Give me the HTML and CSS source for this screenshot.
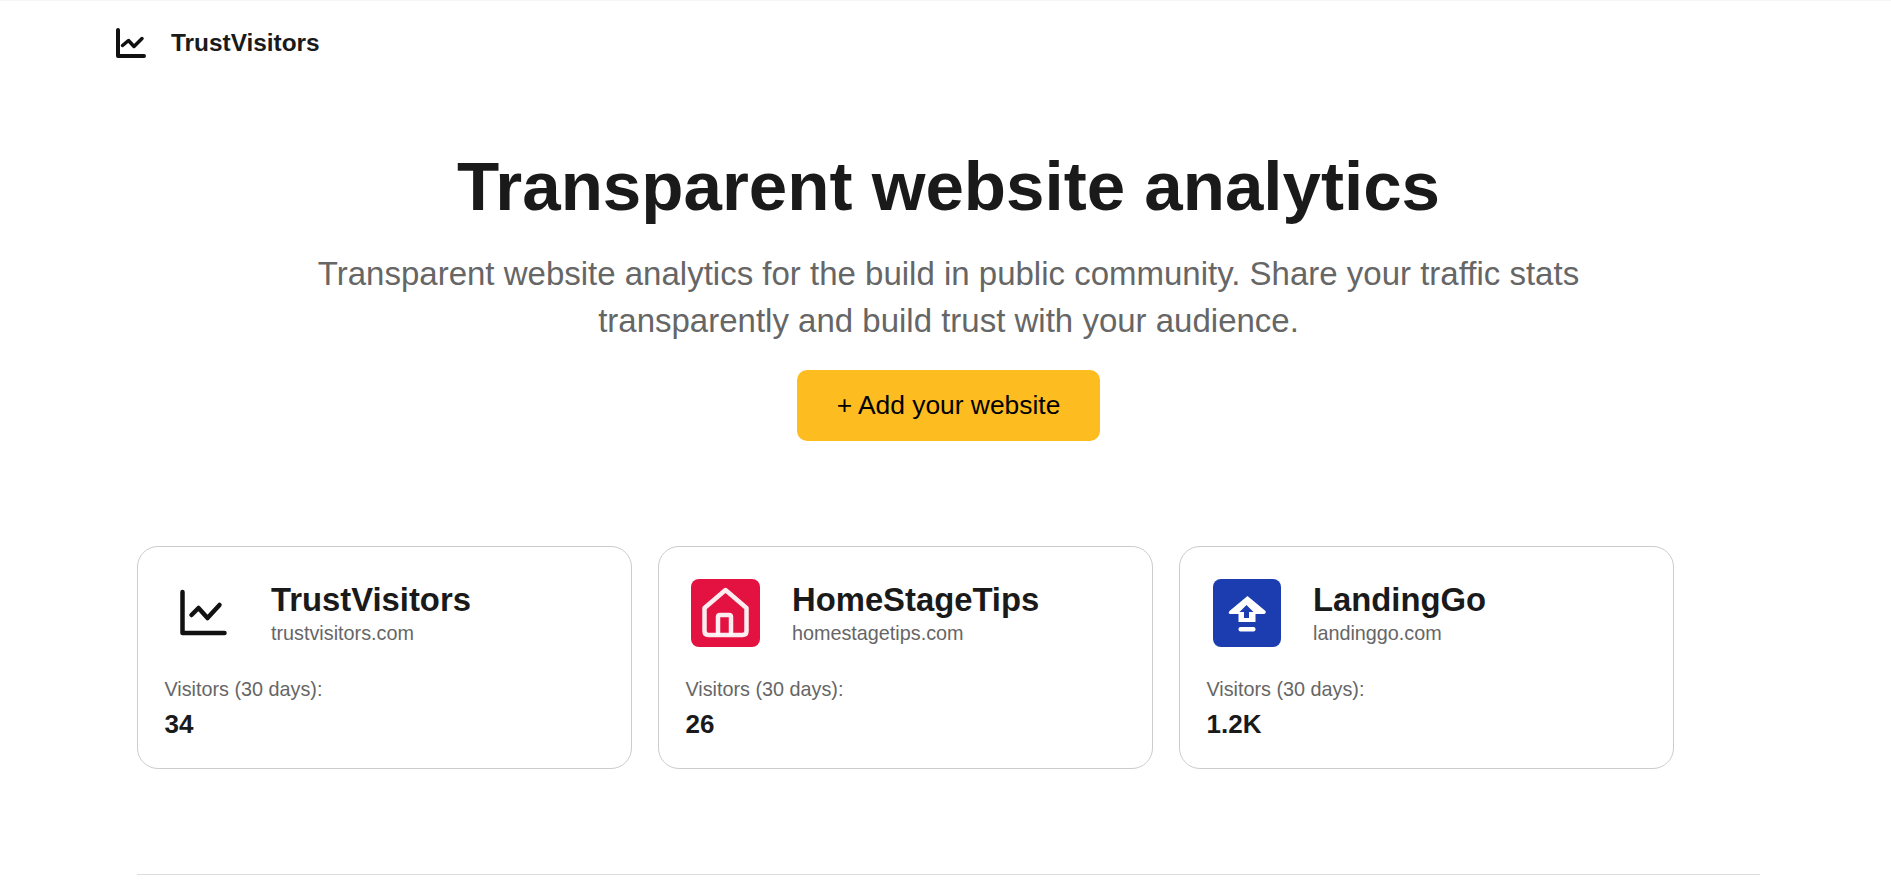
FILE: index.html
```html
<!DOCTYPE html>
<html lang="en">
<head>
  <meta charset="UTF-8" />
  <meta name="viewport" content="width=device-width, initial-scale=1.0" />
  <title>TrustVisitors</title>
  <link rel="stylesheet" href="styles.css">
</head>
<body>
  <header class="topbar">
    <svg class="topbar-icon" viewBox="0 0 32 32" fill="none" stroke="currentColor" stroke-width="4" stroke-linecap="round" stroke-linejoin="round">
      <path d="M3 3v26h26" />
      <path d="M7.500 18.500l6-5 5.500 6 8-8" stroke-width="3.500" />
    </svg>
    <span class="brand">TrustVisitors</span>
  </header>

  <main class="page">
    <section class="hero">
      <h1>Transparent website analytics</h1>
      <p>Transparent website analytics for the build in public community. Share your traffic stats transparently and build trust with your audience.</p>
      <a class="add-btn" href="#">+ Add your website</a>
    </section>

    <section class="cards">
      <article class="card">
        <div class="card-head">
          <div class="logo">
            <svg viewBox="0 0 80 80" fill="none" stroke="#111" stroke-width="4.500" stroke-linecap="round" stroke-linejoin="round">
              <path d="M17.500 19v41h42" />
              <path d="M26.500 42l7-7 9 10 12-13" />
            </svg>
          </div>
          <div>
            <h2>TrustVisitors</h2>
            <div class="domain">trustvisitors.com</div>
          </div>
        </div>
        <div class="stat-label">Visitors (30 days):</div>
        <div class="stat-value">34</div>
      </article>

      <article class="card">
        <div class="card-head">
          <div class="logo">
            <svg viewBox="0 0 80 80" fill="none">
              <rect x="5" y="6" width="69" height="68" rx="8" fill="#e31240" />
              <path d="M18.500 35L39.500 17 60.500 35V58Q60.500 62 56.500 62H22.500Q18.500 62 18.500 58Z" stroke="#fff" stroke-width="4.500" stroke-linejoin="round" stroke-opacity=".92" />
              <path d="M32 62V44Q32 42 34 42H43Q45 42 45 44V62" stroke="#fff" stroke-width="4.500" stroke-opacity=".92" />
            </svg>
          </div>
          <div>
            <h2>HomeStageTips</h2>
            <div class="domain">homestagetips.com</div>
          </div>
        </div>
        <div class="stat-label">Visitors (30 days):</div>
        <div class="stat-value">26</div>
      </article>

      <article class="card">
        <div class="card-head">
          <div class="logo">
            <svg viewBox="0 0 80 80" fill="none">
              <rect x="6" y="6" width="68" height="68" rx="8" fill="#1c3db0" />
              <path d="M40.500 23L58.500 38Q59.500 41 56.500 41H48.500V49H31.500V41H23.500Q20.500 41 22.500 38Z" fill="#fff" />
              <path d="M39.500 32L46.500 39H42V45H37V39H32.500Z" fill="#1c3db0" />
              <rect x="31.500" y="54" width="17" height="4.500" rx="2" fill="#fff" />
            </svg>
          </div>
          <div>
            <h2>LandingGo</h2>
            <div class="domain">landinggo.com</div>
          </div>
        </div>
        <div class="stat-label">Visitors (30 days):</div>
        <div class="stat-value">1.2K</div>
      </article>
    </section>

    <hr class="divider" />
  </main>
</body>
</html>
```

FILE: styles.css
```css
body {
  font-family: "Liberation Sans", Arial, sans-serif;
  color: #1a1a1a;
  background: #fff;
  margin: 0;
  height: 888px;
  overflow: hidden;
  border-top: 1px solid #f7f3f9;
  box-sizing: border-box;
}
.topbar {
  display: flex;
  align-items: center;
  gap: 24px;
  height: 84px;
  padding-left: 115px;
  padding-bottom: 1px;
  box-sizing: border-box;
}
.topbar-icon {
  width: 32px;
  height: 32px;
  color: #111;
}
.brand {
  font-size: 24.4px;
  font-weight: bold;
}
.page {
  width: 1623px;
  margin-left: 137px;
}
.hero {
  display: flex;
  flex-direction: column;
  align-items: center;
  text-align: center;
  padding-top: 60px;
}
.hero h1 {
  font-size: 69.1px;
  line-height: 82px;
  font-weight: bold;
  margin: 0;
}
.hero p {
  width: 1300px;
  font-size: 33px;
  line-height: 47px;
  color: #666;
  margin: 23px 0 0;
}
.add-btn {
  margin-top: 26px;
  padding: 0 40px;
  height: 71px;
  line-height: 71px;
  font-size: 26.4px;
  color: #000;
  background: #fdbd21;
  border-radius: 10px;
  text-decoration: none;
}
.cards {
  display: grid;
  grid-template-columns: repeat(3, 495px);
  gap: 26px;
  margin-top: 105px;
}
.card {
  height: 223px;
  padding: 26px 26px 26px 26.5px;
  border: 1px solid #ccc;
  border-radius: 21px;
  box-sizing: border-box;
}
.card-head {
  display: flex;
  align-items: center;
  gap: 26.5px;
}
.logo {
  width: 80px;
  height: 80px;
  flex-shrink: 0;
}
.logo svg {
  display: block;
  width: 80px;
  height: 80px;
}
.card h2 {
  font-size: 32.8px;
  line-height: 38px;
  font-weight: bold;
  margin: 0;
}
.domain {
  font-size: 19.8px;
  line-height: 24px;
  color: #666;
  margin-top: 2px;
}
.stat-label {
  font-size: 19.8px;
  line-height: 24px;
  color: #666;
  margin-top: 24px;
}
.stat-value {
  font-size: 26px;
  line-height: 30px;
  font-weight: bold;
  margin-top: 8px;
}
.divider {
  border: none;
  border-top: 1px solid #ddd;
  margin: 105px 0 0;
}
```
